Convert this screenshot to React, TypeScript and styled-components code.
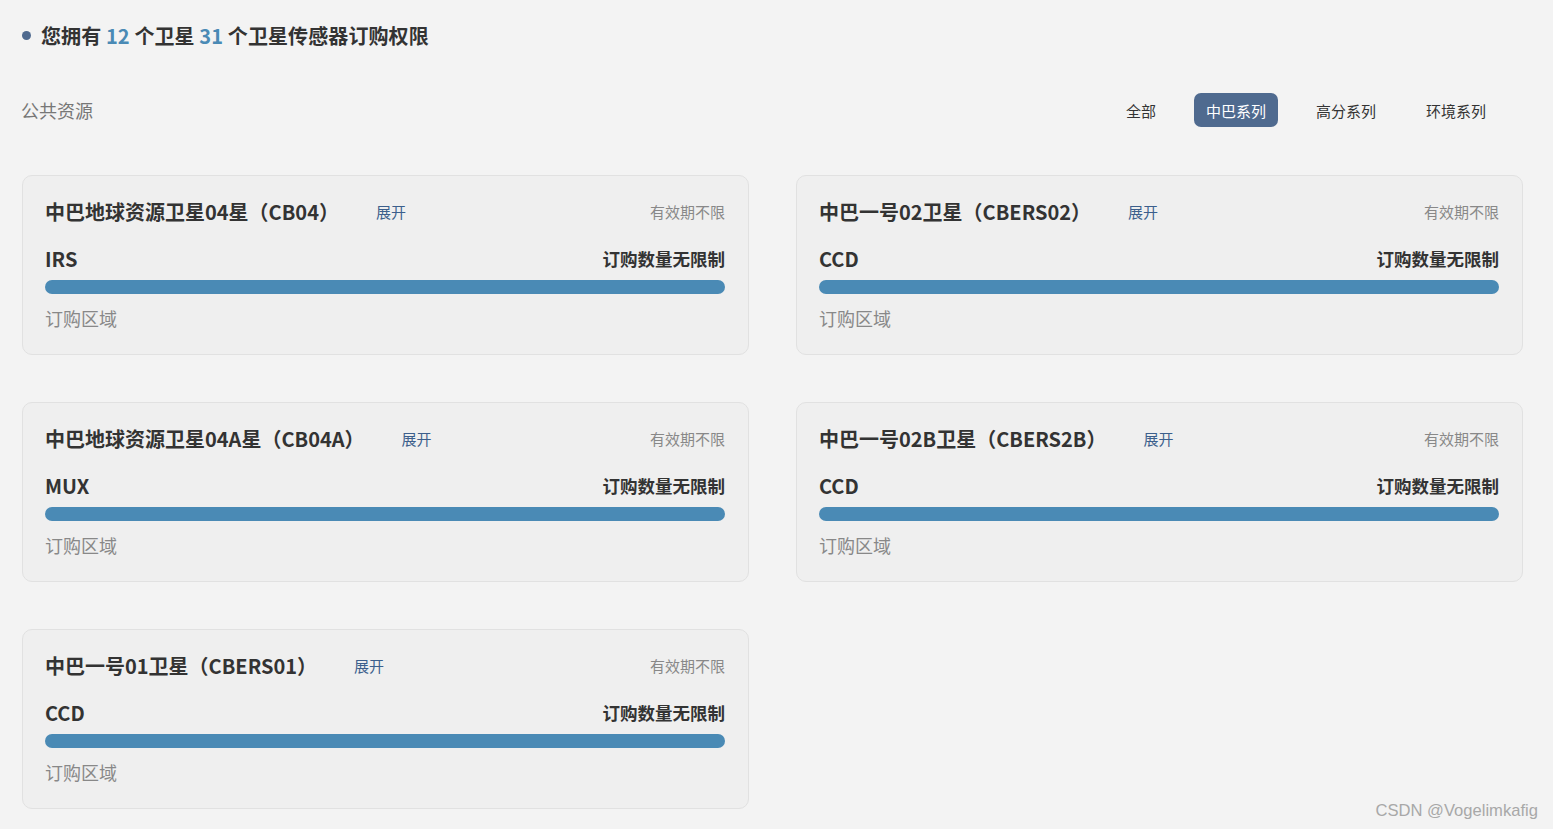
import React from "react";
import styled, { createGlobalStyle } from "styled-components";

const Global = createGlobalStyle`
  html, body { margin: 0; padding: 0; background: #f3f3f3; }
  body { font-family: "Noto Sans CJK SC", "Noto Sans", sans-serif; color: #333; }
`;

const Page = styled.div`
  position: relative;
  min-height: 829px;
  box-sizing: border-box;
  padding: 19px 30px 20px 22px;
`;

const Heading = styled.div`
  display: flex;
  align-items: center;
  gap: 10px;
  height: 32px;
  font-size: 20px;
  font-weight: 700;
  letter-spacing: 0.1px;
  color: #333;
`;

const Dot = styled.span`
  width: 9px;
  height: 9px;
  border-radius: 50%;
  background: #4f6a8f;
`;

const Num = styled.span`
  color: #4a8ab5;
`;

const Toolbar = styled.div`
  display: flex;
  align-items: center;
  justify-content: space-between;
  margin-top: 42px;
  height: 34px;
`;

const Section = styled.div`
  font-size: 18px;
  color: #777;
  margin-left: -1px;
`;

const Tabs = styled.div`
  display: flex;
  gap: 26px;
  margin-right: 25px;
`;

const Tab = styled.div<{ $active?: boolean }>`
  height: 34px;
  padding: 0 12px;
  display: flex;
  align-items: center;
  border-radius: 7px;
  font-size: 15px;
  color: ${(p) => (p.$active ? "#fff" : "#333")};
  background: ${(p) => (p.$active ? "#4f6a8f" : "transparent")};
`;

const Grid = styled.div`
  margin-top: 48px;
  display: grid;
  grid-template-columns: 1fr 1fr;
  column-gap: 47px;
  row-gap: 47px;
`;

const Card = styled.div`
  background: #efefef;
  border: 1px solid #e1e1e1;
  border-radius: 10px;
  padding: 21px 23px 22px 22px;
  height: 180px;
  box-sizing: border-box;
`;

const TitleRow = styled.div`
  display: flex;
  align-items: center;
  height: 28px;
`;

const Title = styled.div`
  font-size: 20px;
  font-weight: 700;
  color: #333;
`;

const Expand = styled.span`
  margin-left: 37px;
  font-size: 15px;
  color: #3c5f8c;
`;

const Validity = styled.span`
  margin-left: auto;
  font-size: 15px;
  color: #888;
`;

const SensorRow = styled.div`
  display: flex;
  justify-content: space-between;
  align-items: center;
  margin-top: 19px;
  height: 28px;
`;

const Sensor = styled.div`
  font-size: 20px;
  font-weight: 700;
  color: #333;
`;

const Quota = styled.div`
  font-size: 17.5px;
  font-weight: 700;
  color: #333;
`;

const Bar = styled.div`
  margin-top: 8px;
  height: 14px;
  border-radius: 7px;
  background: #4a8ab5;
`;

const Region = styled.div`
  margin-top: 11px;
  font-size: 18px;
  line-height: 26px;
  color: #888;
`;

const Watermark = styled.div`
  position: absolute;
  right: 15px;
  bottom: 8px;
  font-family: "Liberation Sans", Arial, sans-serif;
  font-size: 16.6px;
  color: #a8a8a8;
`;

const cards = [
  { title: "中巴地球资源卫星04星（CB04）", sensor: "IRS" },
  { title: "中巴一号02卫星（CBERS02）", sensor: "CCD" },
  { title: "中巴地球资源卫星04A星（CB04A）", sensor: "MUX" },
  { title: "中巴一号02B卫星（CBERS2B）", sensor: "CCD" },
  { title: "中巴一号01卫星（CBERS01）", sensor: "CCD" },
];

const tabs = ["全部", "中巴系列", "高分系列", "环境系列"];

export default function App() {
  return (
    <>
      <Global />
      <Page>
        <Heading>
          <Dot />
          <span>
            您拥有 <Num>12</Num> 个卫星 <Num>31</Num> 个卫星传感器订购权限
          </span>
        </Heading>
        <Toolbar>
          <Section>公共资源</Section>
          <Tabs>
            {tabs.map((t) => (
              <Tab key={t} $active={t === "中巴系列"}>
                {t}
              </Tab>
            ))}
          </Tabs>
        </Toolbar>
        <Grid>
          {cards.map((c, i) => (
            <Card key={i}>
              <TitleRow>
                <Title>{c.title}</Title>
                <Expand>展开</Expand>
                <Validity>有效期不限</Validity>
              </TitleRow>
              <SensorRow>
                <Sensor>{c.sensor}</Sensor>
                <Quota>订购数量无限制</Quota>
              </SensorRow>
              <Bar />
              <Region>订购区域</Region>
            </Card>
          ))}
        </Grid>
        <Watermark>CSDN @Vogelimkafig</Watermark>
      </Page>
    </>
  );
}
